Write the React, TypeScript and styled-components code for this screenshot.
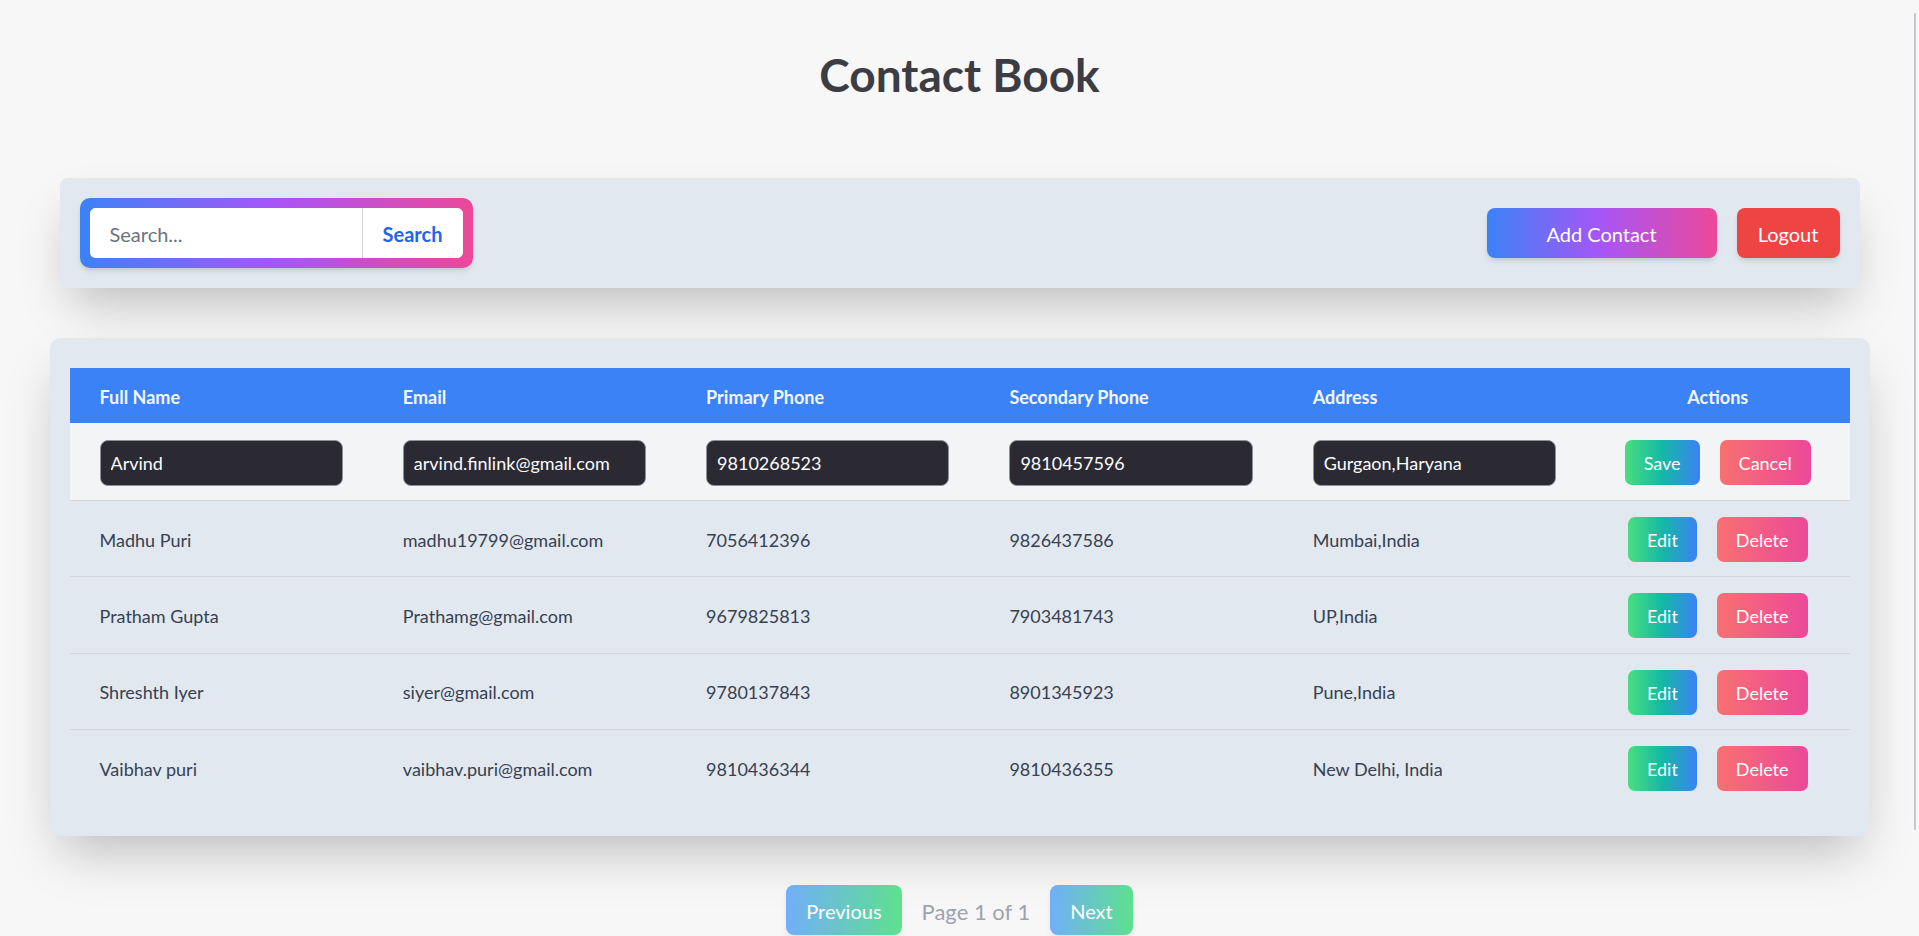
import React from "react";
import styled, { createGlobalStyle } from "styled-components";

const Global = createGlobalStyle`
  html { scrollbar-width: none; }
  html::-webkit-scrollbar, body::-webkit-scrollbar { display: none; }
  * { box-sizing: border-box; }
  body {
    margin: 0;
    background: #f7f7f7;
    font-family: Lato, "Noto Sans", "Liberation Sans", sans-serif;
    color: #374151;
  }
`;

const Page = styled.div`
  padding: 47px 0 60px;
  display: flex;
  flex-direction: column;
  align-items: center;
`;

const Title = styled.h1`
  margin: 0 0 75px;
  font-size: 46px;
  line-height: 56px;
  font-weight: 700;
  color: #3b3c44;
  text-align: center;
`;

const Toolbar = styled.div`
  width: 1800px;
  padding: 20px;
  background: #e2e8f0;
  border-radius: 8px;
  display: flex;
  align-items: center;
  justify-content: space-between;
  box-shadow: 0 25px 50px -12px rgba(0, 0, 0, 0.25);
`;

const SearchFrame = styled.div`
  padding: 10px;
  border-radius: 10px;
  background: linear-gradient(to right, #3b82f6, #a855f7, #ec4899);
  box-shadow: 0 4px 6px -1px rgba(0, 0, 0, 0.1), 0 2px 4px -2px rgba(0, 0, 0, 0.1);
`;

const SearchBox = styled.div`
  display: flex;
  background: #fff;
  border-radius: 6px;
  overflow: hidden;
  height: 50px;
`;

const SearchInput = styled.input`
  width: 272px;
  height: 50px;
  border: none;
  outline: none;
  padding: 2px 20px 0;
  font-family: inherit;
  font-size: 20px;
  color: #374151;
  background: #fff;
  &::placeholder { color: #6b7280; }
`;

const SearchButton = styled.button`
  width: 101px;
  height: 50px;
  border: none;
  border-left: 1px solid #d1d5db;
  background: #fff;
  color: #2563eb;
  font-family: inherit;
  font-size: 20px;
  font-weight: 700;
  padding: 2px 0 0;
  cursor: pointer;
`;

const ButtonGroup = styled.div`
  display: flex;
  gap: 20px;
`;

const ToolButton = styled.button<{ $variant: "add" | "logout" }>`
  height: 50px;
  width: ${(p) => (p.$variant === "add" ? "230px" : "103px")};
  border: none;
  border-radius: 8px;
  color: #fff;
  font-family: inherit;
  font-size: 20px;
  padding: 2px 0 0;
  cursor: pointer;
  background: ${(p) =>
    p.$variant === "add"
      ? "linear-gradient(to right, #3b82f6, #a855f7, #ec4899)"
      : "#ef4444"};
  box-shadow: 0 4px 6px -1px rgba(0, 0, 0, 0.1), 0 2px 4px -2px rgba(0, 0, 0, 0.1);
`;

const Card = styled.div`
  width: 1820px;
  margin-top: 50px;
  padding: 30px 20px;
  background: #e2e8f0;
  border-radius: 10px;
  box-shadow: 0 25px 50px -12px rgba(0, 0, 0, 0.25);
`;

const Table = styled.table`
  width: 100%;
  border-collapse: separate;
  border-spacing: 0;
  table-layout: fixed;
`;

const HeadCell = styled.th<{ $center?: boolean }>`
  height: 55px;
  padding: 2px 30px 0;
  background: #3b82f6;
  color: #f3f6ff;
  font-size: 18px;
  font-weight: 700;
  text-align: ${(p) => (p.$center ? "center" : "left")};
  vertical-align: middle;
`;

const Cell = styled.td<{ $edit?: boolean; $last?: boolean; $center?: boolean }>`
  height: ${(p) => (p.$edit ? "78px" : "76.25px")};
  padding: ${(p) => (p.$edit ? "2px 30px 0" : "2px 30px 0")};
  font-size: 18px;
  color: #374151;
  vertical-align: middle;
  background: ${(p) => (p.$edit ? "#f3f4f6" : "transparent")};
  border-bottom: ${(p) => (p.$last ? "none" : "1px solid #d1d5db")};
  text-align: ${(p) => (p.$center ? "center" : "left")};
  white-space: nowrap;
`;

const EditInput = styled.input`
  width: 100%;
  height: 46px;
  padding: 1px 10px 0;
  background: #2b2a33;
  border: 1px solid #8f8f9d;
  border-radius: 8px;
  color: #fbfbfe;
  font-family: inherit;
  font-size: 18px;
  outline: none;
`;

const Actions = styled.div`
  display: flex;
  justify-content: center;
  gap: 20px;
`;

const RowButton = styled.button<{ $kind: "ok" | "danger" }>`
  height: 45px;
  padding: 1px 19px 0;
  border: none;
  border-radius: 7px;
  color: #fff;
  font-family: inherit;
  font-size: 18px;
  cursor: pointer;
  background: ${(p) =>
    p.$kind === "ok"
      ? "linear-gradient(to right, #4ade80, #14b8a6, #3b82f6)"
      : "linear-gradient(to right, #f87171, #ec4899)"};
`;

const Pager = styled.div`
  margin-top: 49px;
  display: flex;
  align-items: center;
  gap: 20px;
`;

const PageButton = styled.button`
  height: 50px;
  padding: 2px 20px 0;
  border: none;
  border-radius: 8px;
  color: #fff;
  font-family: inherit;
  font-size: 20px;
  background: linear-gradient(to right, #60a5fa, #4ade80);
  opacity: 0.88;
  box-shadow: 0 4px 6px -1px rgba(0, 0, 0, 0.1);
`;

const PageInfo = styled.span`
  font-size: 22px;
  color: #9ca3af;
  padding-top: 2px;
`;

const ScrollThumb = styled.div`
  position: fixed;
  top: 13px;
  right: 3px;
  width: 2px;
  height: 817px;
  background: #c5c7cf;
  border-radius: 1px;
`;

const contacts = [
  ["Madhu Puri", "madhu19799@gmail.com", "7056412396", "9826437586", "Mumbai,India"],
  ["Pratham Gupta", "Prathamg@gmail.com", "9679825813", "7903481743", "UP,India"],
  ["Shreshth Iyer", "siyer@gmail.com", "9780137843", "8901345923", "Pune,India"],
  ["Vaibhav puri", "vaibhav.puri@gmail.com", "9810436344", "9810436355", "New Delhi, India"],
];

const editing = ["Arvind", "arvind.finlink@gmail.com", "9810268523", "9810457596", "Gurgaon,Haryana"];

const headers = ["Full Name", "Email", "Primary Phone", "Secondary Phone", "Address"];

export default function App() {
  return (
    <>
      <Global />
      <Page>
        <Title>Contact Book</Title>
        <Toolbar>
          <SearchFrame>
            <SearchBox>
              <SearchInput placeholder="Search..." />
              <SearchButton>Search</SearchButton>
            </SearchBox>
          </SearchFrame>
          <ButtonGroup>
            <ToolButton $variant="add">Add Contact</ToolButton>
            <ToolButton $variant="logout">Logout</ToolButton>
          </ButtonGroup>
        </Toolbar>
        <Card>
          <Table>
            <colgroup>
              <col style={{ width: "303.3px" }} />
              <col style={{ width: "303.3px" }} />
              <col style={{ width: "303.3px" }} />
              <col style={{ width: "303.3px" }} />
              <col style={{ width: "303.3px" }} />
              <col />
            </colgroup>
            <thead>
              <tr>
                {headers.map((h) => (
                  <HeadCell key={h}>{h}</HeadCell>
                ))}
                <HeadCell $center>Actions</HeadCell>
              </tr>
            </thead>
            <tbody>
              <tr>
                {editing.map((v, i) => (
                  <Cell $edit key={i}>
                    <EditInput defaultValue={v} />
                  </Cell>
                ))}
                <Cell $edit $center>
                  <Actions>
                    <RowButton $kind="ok">Save</RowButton>
                    <RowButton $kind="danger">Cancel</RowButton>
                  </Actions>
                </Cell>
              </tr>
              {contacts.map((c, r) => (
                <tr key={r}>
                  {c.map((v, i) => (
                    <Cell key={i} $last={r === contacts.length - 1}>
                      {v}
                    </Cell>
                  ))}
                  <Cell $center $last={r === contacts.length - 1}>
                    <Actions>
                      <RowButton $kind="ok">Edit</RowButton>
                      <RowButton $kind="danger">Delete</RowButton>
                    </Actions>
                  </Cell>
                </tr>
              ))}
            </tbody>
          </Table>
        </Card>
        <Pager>
          <PageButton>Previous</PageButton>
          <PageInfo>Page 1 of 1</PageInfo>
          <PageButton>Next</PageButton>
        </Pager>
      </Page>
      <ScrollThumb />
    </>
  );
}
